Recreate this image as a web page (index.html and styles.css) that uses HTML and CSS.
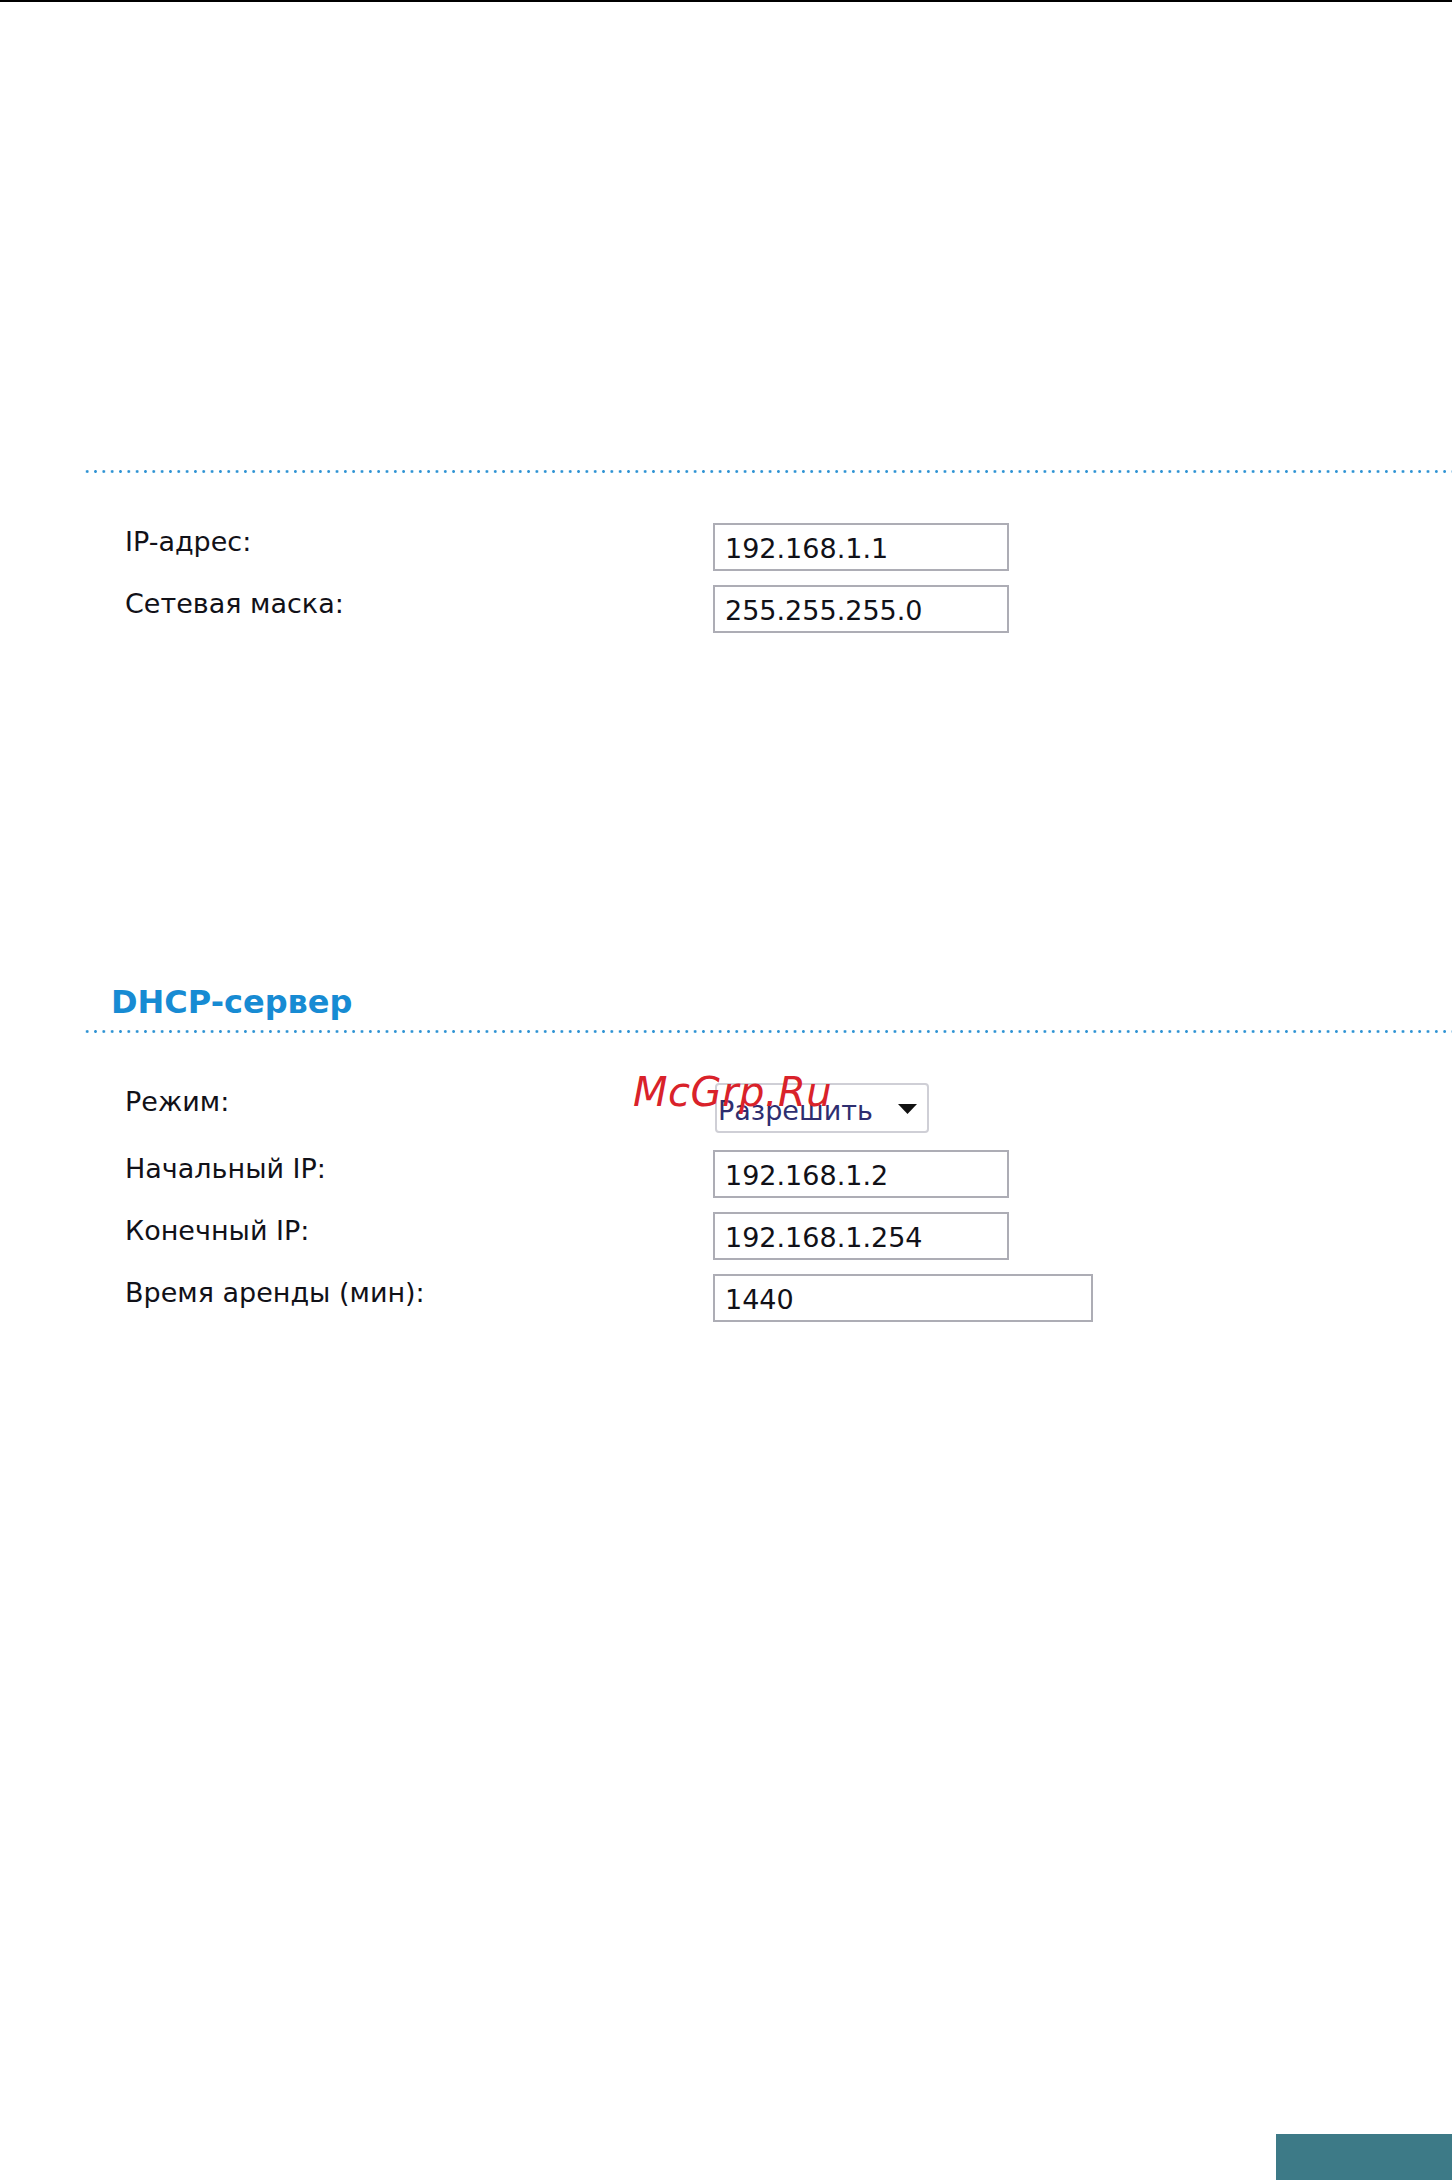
FILE: index.html
```html
<!DOCTYPE html>
<html lang="ru">

<head>
  <meta charset="UTF-8">
  <title>LAN</title>
  <link rel="stylesheet" href="styles.css">
</head>

<body>
  <div class="page">

    <div class="section section-lan">
      <div class="rule"></div>
      <div class="rows">
        <div class="row">
          <label class="label" for="ipAddr">IP-адрес:</label>
          <input class="field" id="ipAddr" type="text" value="192.168.1.1">
        </div>
        <div class="row">
          <label class="label" for="netMask">Сетевая маска:</label>
          <input class="field" id="netMask" type="text" value="255.255.255.0">
        </div>
      </div>
    </div>

    <div class="section section-dhcp">
      <h2 class="section-title">DHCP-сервер</h2>
      <div class="rule"></div>
      <div class="rows">
        <div class="row row-mode">
          <span class="label">Режим:</span>
          <div class="select">
            <span class="select-text">Разрешить</span>
            <svg class="select-arrow" width="19" height="10" viewBox="0 0 19 10">
              <path d="M0 0 H19 L9.5 10 Z" fill="#111"/>
            </svg>
          </div>
          <span class="watermark">McGrp.Ru</span>
        </div>
        <div class="row">
          <label class="label" for="startIp">Начальный IP:</label>
          <input class="field" id="startIp" type="text" value="192.168.1.2">
        </div>
        <div class="row">
          <label class="label" for="endIp">Конечный IP:</label>
          <input class="field" id="endIp" type="text" value="192.168.1.254">
        </div>
        <div class="row">
          <label class="label" for="lease">Время аренды (мин):</label>
          <input class="field field-wide" id="lease" type="text" value="1440">
        </div>
      </div>
    </div>

  </div>

  <div class="page-tab"></div>
</body>

</html>
```

FILE: styles.css
```css
html, body {
  margin: 0;
  padding: 0;
}

body {
  min-height: 2180px;
  box-sizing: border-box;
  border-top: 2px solid #000;
  background: #fff;
  display: flex;
  flex-direction: column;
  font-family: "DejaVu Sans", "Liberation Sans", sans-serif;
  color: #111118;
}

.page {
  padding-left: 83px;
}

/* dotted separator line */
.rule {
  height: 3px;
  background-image: radial-gradient(circle, #2f93d3 1.1px, rgba(47, 147, 211, 0) 1.7px);
  background-size: 8.34px 3px;
  background-repeat: repeat-x;
  background-position: 0 0;
}

.section-lan {
  padding-top: 468px;
}

.section-dhcp {
  padding-top: 349px;
}

.section-title {
  margin: 0 0 8px 28px;
  height: 40px;
  font-size: 32px;
  line-height: 40px;
  font-weight: bold;
  color: #178bd3;
}

.rows {
  display: flex;
  flex-direction: column;
  gap: 14px;
  padding: 50px 0 0 42px;
}

.row {
  display: flex;
  align-items: flex-start;
  position: relative;
}

.row-mode {
  margin-bottom: 3px;
}

.label {
  width: 588px;
  flex-shrink: 0;
  font-size: 27px;
  line-height: 34px;
  margin-top: 2px;
  color: #111118;
}

.field {
  width: 296px;
  height: 48px;
  box-sizing: border-box;
  margin: 0;
  padding: 2px 10px 0;
  border: 2px solid #adadb5;
  border-radius: 0;
  background: #fff;
  font-family: "DejaVu Sans", "Liberation Sans", sans-serif;
  font-size: 27px;
  color: #111118;
  outline: none;
}

.field-wide {
  width: 380px;
}

.select {
  width: 214px;
  height: 50px;
  box-sizing: border-box;
  margin-left: 2px;
  padding: 4px 10px 0 1px;
  border: 2px solid #cfcfd6;
  border-radius: 4px;
  display: flex;
  align-items: center;
  justify-content: space-between;
}

.select-text {
  font-size: 27px;
  color: #2e2e70;
}

.select-arrow {
  display: block;
  margin-top: -3px;
}

/* red site mark laid over the mode row */
.watermark {
  position: absolute;
  left: 508px;
  top: -11px;
  font-size: 40px;
  line-height: 40px;
  font-style: italic;
  letter-spacing: 0.5px;
  color: #d9222a;
  pointer-events: none;
}

.page-tab {
  margin-top: auto;
  align-self: flex-end;
  width: 176px;
  height: 46px;
  background: #3d7a87;
}
```
